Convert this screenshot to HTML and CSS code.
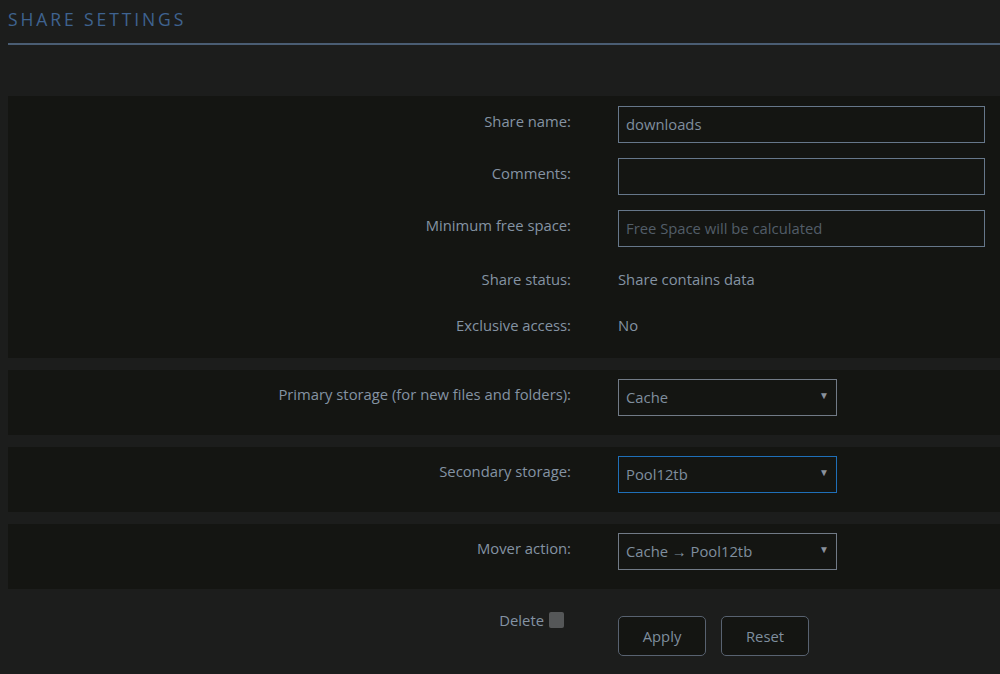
FILE: index.html
```html
<!DOCTYPE html>
<html>
<head>
<meta charset="utf-8">
<link rel="stylesheet" href="styles.css">
</head>
<body>
<div class="page">
  <div class="title-bar"><h2 class="title">SHARE SETTINGS</h2></div>

  <div class="panel panel-main">
    <div class="row">
      <label class="label">Share name:</label>
      <div class="value"><div class="input">downloads</div></div>
    </div>
    <div class="row">
      <label class="label">Comments:</label>
      <div class="value"><div class="input"></div></div>
    </div>
    <div class="row">
      <label class="label">Minimum free space:</label>
      <div class="value"><div class="input placeholder">Free Space will be calculated</div></div>
    </div>
    <div class="row row-text">
      <label class="label">Share status:</label>
      <div class="value text">Share contains data</div>
    </div>
    <div class="row row-text">
      <label class="label">Exclusive access:</label>
      <div class="value text">No</div>
    </div>
  </div>

  <div class="panel panel-select">
    <div class="row">
      <label class="label">Primary storage (for new files and folders):</label>
      <div class="value"><div class="select">Cache<span class="arrow">▼</span></div></div>
    </div>
  </div>

  <div class="panel panel-select">
    <div class="row">
      <label class="label">Secondary storage:</label>
      <div class="value"><div class="select focused">Pool12tb<span class="arrow">▼</span></div></div>
    </div>
  </div>

  <div class="panel panel-select">
    <div class="row">
      <label class="label">Mover action:</label>
      <div class="value"><div class="select">Cache → Pool12tb<span class="arrow">▼</span></div></div>
    </div>
  </div>

  <div class="actions">
    <div class="delete"><span>Delete</span><span class="checkbox"></span></div>
    <div class="buttons">
      <button class="btn">Apply</button>
      <button class="btn">Reset</button>
    </div>
  </div>
</div>
</body>
</html>
```
FILE: styles.css
```css
html, body {
  margin: 0;
  padding: 0;
  background: #1c1d1c;
  overflow: hidden;
}
body {
  font-family: "Open Sans", "Noto Sans", sans-serif;
  font-size: 14.8px;
  color: #8493a3;
}
.page {
  padding-left: 8px;
}
.title-bar {
  height: 43px;
  border-bottom: 2px solid #4a5d73;
  margin-bottom: 51px;
}
.title {
  margin: 0;
  padding-top: 8px;
  font-weight: normal;
  font-size: 17.5px;
  letter-spacing: 2.9px;
  color: #3f6390;
  line-height: 22px;
}
.panel {
  background: #141512;
  margin-bottom: 12px;
}
.panel-main {
  display: flex;
  flex-direction: column;
  gap: 15px;
  padding: 10px 0 19px;
}
.panel-select {
  padding: 9px 0 19px;
}
.row {
  display: grid;
  grid-template-columns: 563px 1fr;
  column-gap: 47px;
  align-items: start;
}
.row-text {
  height: 31px;
}
.label {
  text-align: right;
  line-height: 20px;
  padding-top: 5px;
}
.row-text .label,
.value.text {
  line-height: 20px;
  padding-top: 7px;
}
.input {
  box-sizing: border-box;
  width: 367px;
  height: 37px;
  border: 1px solid #66778a;
  padding: 0 7px;
  line-height: 35px;
  color: #7f8e9e;
}
.input.placeholder {
  color: #525d68;
}
.select {
  box-sizing: border-box;
  width: 219px;
  height: 37px;
  border: 1px solid #717a86;
  padding: 0 7px;
  line-height: 35px;
  color: #7f8e9e;
  display: flex;
  justify-content: space-between;
}
.select.focused {
  border-color: #1f6fb8;
}
.arrow {
  font-size: 10px;
  color: #8a929c;
  padding-right: 0;
  margin-top: -2px;
}
.actions {
  display: grid;
  grid-template-columns: 556px 1fr;
  column-gap: 54px;
  padding-top: 3px;
}
.delete {
  display: flex;
  justify-content: flex-end;
  align-items: center;
  gap: 5px;
  height: 32px;
}
.checkbox {
  width: 15px;
  height: 16px;
  background: #555758;
  border-radius: 2px;
}
.buttons {
  display: flex;
  gap: 15px;
  padding-top: 12px;
}
.btn {
  box-sizing: border-box;
  width: 88px;
  height: 40px;
  background: #141512;
  border: 1px solid #586270;
  border-radius: 5px;
  color: #7f8e9e;
  font-family: "Open Sans", "Noto Sans", sans-serif;
  font-size: 14.8px;
  padding: 0;
}
```
